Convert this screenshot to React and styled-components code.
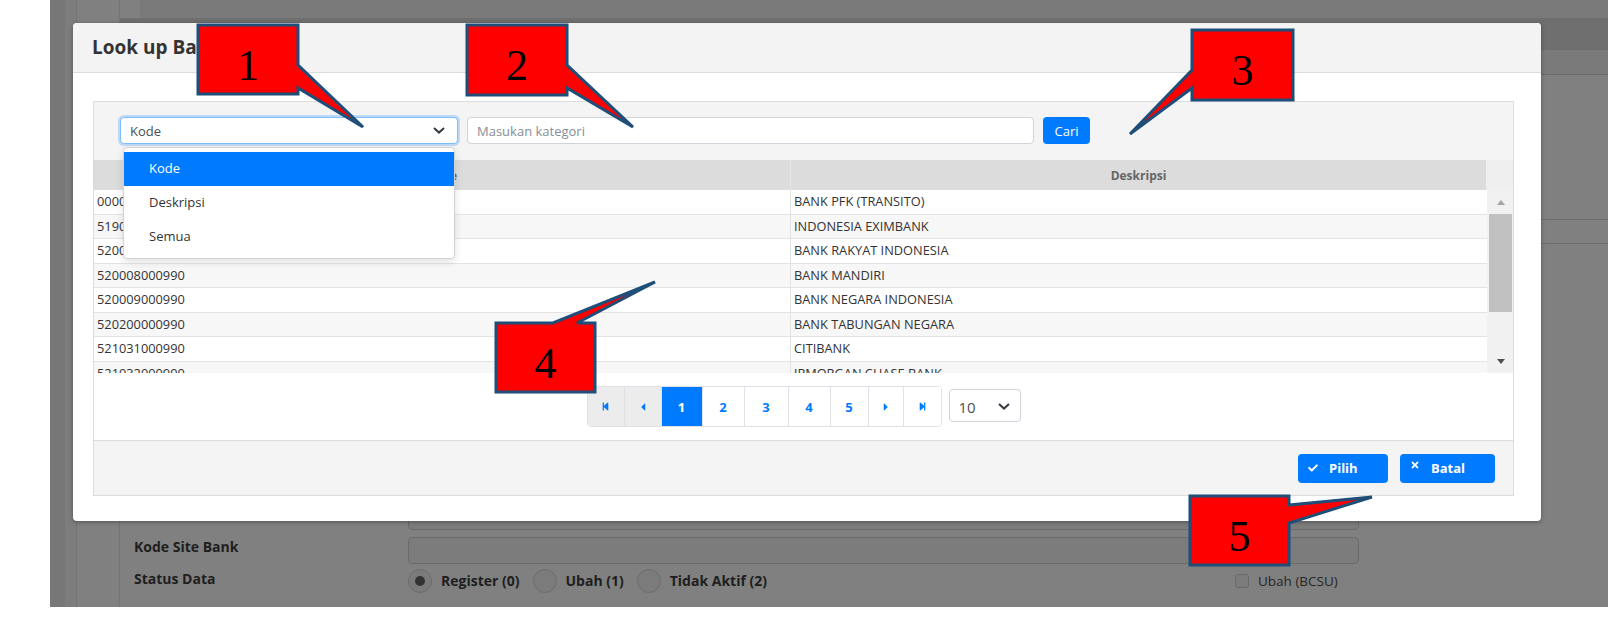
import styled, { createGlobalStyle } from "styled-components";
import { FaCheck, FaTimes, FaStepBackward, FaStepForward, FaCaretLeft, FaCaretRight } from "react-icons/fa";

const GlobalStyle = createGlobalStyle`
  html, body { margin: 0; padding: 0; background: #fff; }
  body { font-family: "Open Sans", "Liberation Sans", sans-serif; }
  * { box-sizing: border-box; }
`;

const Screen = styled.div`
  position: relative;
  width: 1622px;
  height: 620px;
  overflow: hidden;
  background: #fff;
`;

/* ---- page behind the modal (darkened by backdrop) ---- */
const Backdrop = styled.div`
  margin-left: 50px;
  width: 1558px;
  height: 607px;
  background: #808080;
  display: flex;
`;
const Rail = styled.div`
  width: 15px;
  background: #777;
`;
const NavStrip = styled.div`
  width: ${(p) => p.$w}px;
  border-right: 1px solid #737373;
  background: ${(p) => p.$bg || "#808080"};
`;
const Main = styled.div`
  flex: 1;
  display: flex;
  flex-direction: column;
  min-width: 0;
`;
const Band = styled.div`
  height: ${(p) => p.$h}px;
  flex-shrink: 0;
  margin-left: ${(p) => p.$ml || 0}px;
  background: ${(p) => p.$bg || "transparent"};
  border-bottom: ${(p) => (p.$line ? "1px solid #6c6c6c" : "none")};
`;
const Form = styled.div`
  margin-top: auto;
  padding: 0 0 15px 14px;
  display: flex;
  flex-direction: column;
`;
const FormRow = styled.div`
  display: flex;
  align-items: center;
  height: ${(p) => p.$h}px;
  margin-top: ${(p) => p.$mt || 0}px;
`;
const FormLabel = styled.div`
  width: 274px;
  align-self: flex-start;
  line-height: 20px;
  font-size: 14px;
  font-weight: 700;
  color: #1e1e1e;
`;
const FieldBox = styled.div`
  width: 951px;
  height: 100%;
  background: #7c7c7c;
  border: 1px solid #6a6a6a;
  border-radius: 4px;
`;
const RadioGroup = styled.div`
  display: flex;
  align-items: center;
  width: 827px;
`;
const Radio = styled.span`
  width: 24px;
  height: 24px;
  border-radius: 50%;
  border: 1px solid #6c6c6c;
  background: #7b7b7b;
  display: flex;
  align-items: center;
  justify-content: center;
  margin-right: 9px;
  &::after {
    content: "";
    width: 10px;
    height: 10px;
    border-radius: 50%;
    background: ${(p) => (p.$on ? "#333" : "transparent")};
  }
`;
const RadioText = styled.span`
  font-size: 14px;
  font-weight: 700;
  color: #1e1e1e;
  margin-right: 13px;
`;
const Check = styled.span`
  width: 14px;
  height: 14px;
  border: 1px solid #6a6a6a;
  border-radius: 3px;
  background: #7b7b7b;
  margin-right: 9px;
`;
const CheckText = styled.span`
  font-size: 13.5px;
  color: #262626;
`;

/* ---- modal ---- */
const Modal = styled.div`
  position: absolute;
  left: 73px;
  top: 23px;
  width: 1468px;
  height: 498px;
  background: #fff;
  border-radius: 4px;
  box-shadow: 0 1px 4px rgba(0, 0, 0, 0.35);
  display: flex;
  flex-direction: column;
`;
const ModalHeader = styled.div`
  height: 50px;
  flex-shrink: 0;
  background: #f3f3f3;
  border-bottom: 1px solid #dcdcdc;
  border-radius: 4px 4px 0 0;
  display: flex;
  align-items: center;
  padding: 0 0 2px 19px;
  font-size: 19px;
  font-weight: 700;
  color: #333;
`;
const ModalBody = styled.div`
  flex: 1;
  display: flex;
  padding: 28px 27px 25px 20px;
`;
const Panel = styled.div`
  flex: 1;
  display: flex;
  flex-direction: column;
  background: #f4f4f4;
  border: 1px solid #dcdcdc;
`;
const FilterRow = styled.div`
  height: 58px;
  flex-shrink: 0;
  display: flex;
  align-items: flex-start;
  gap: 9px;
  padding: 15px 0 0 26px;
`;
const SelectWrap = styled.div`
  position: relative;
  width: 338px;
`;
const SelectBox = styled.div`
  height: 27px;
  display: flex;
  align-items: center;
  justify-content: space-between;
  padding: 0 12px 0 9px;
  background: #fff;
  border: 1px solid ${(p) => (p.$focus ? "#80bdff" : "#ced4da")};
  border-radius: 4px;
  box-shadow: ${(p) => (p.$focus ? "0 0 0 2px rgba(0, 123, 255, 0.22)" : "none")};
  font-size: 13px;
  color: #495057;
`;
const TextInput = styled.div`
  width: 567px;
  height: 27px;
  display: flex;
  align-items: center;
  padding-left: 9px;
  background: #fff;
  border: 1px solid #ced4da;
  border-radius: 4px;
  font-size: 13px;
  color: #868e96;
`;
const BlueButton = styled.button`
  height: ${(p) => p.$h || 27}px;
  width: ${(p) => p.$w}px;
  display: flex;
  align-items: center;
  justify-content: ${(p) => (p.$icon ? "flex-start" : "center")};
  gap: 11px;
  padding: 0 0 0 ${(p) => (p.$icon ? 10 : 0)}px;
  background: #007bff;
  border: none;
  border-radius: 4px;
  color: #fff;
  font-family: inherit;
  font-size: 13px;
  font-weight: ${(p) => (p.$icon ? 700 : 400)};
  svg {
    font-size: 10px;
  }
`;
const Menu = styled.div`
  position: absolute;
  left: 3px;
  top: 30px;
  width: 332px;
  padding: 4px 0;
  background: #fff;
  border: 1px solid #d2d2d2;
  border-radius: 4px;
  box-shadow: 0 3px 8px rgba(0, 0, 0, 0.12);
  z-index: 5;
`;
const MenuItem = styled.div`
  height: 34px;
  display: flex;
  align-items: center;
  padding: 0 0 3px 25px;
  font-size: 13px;
  color: ${(p) => (p.$active ? "#fff" : "#333")};
  background: ${(p) => (p.$active ? "#007bff" : "transparent")};
`;

const TableWrap = styled.div`
  height: 280px;
  flex-shrink: 0;
  display: flex;
  flex-direction: column;
  background: #fff;
`;
const HeadRow = styled.div`
  height: 30px;
  display: grid;
  grid-template-columns: 696px 696px 1fr;
  background: #dcdcdc;
`;
const HeadCell = styled.div`
  display: flex;
  align-items: center;
  justify-content: center;
  font-size: 12px;
  font-weight: 700;
  color: #666;
  background: ${(p) => (p.$blank ? "#efefef" : "transparent")};
  border-left: ${(p) => (p.$div ? "1px solid #e6e6e6" : "none")};
`;
const BodyArea = styled.div`
  height: 183px;
  display: flex;
`;
const Rows = styled.div`
  width: 1393px;
  overflow: hidden;
`;
const Row = styled.div`
  display: grid;
  grid-template-columns: 696px 697px;
  height: 24.5px;
  border-bottom: 1px solid #e3e3e3;
  background: ${(p) => (p.$alt ? "#f7f7f7" : "#fff")};
`;
const Cell = styled.div`
  padding-left: 3px;
  font-size: 12.8px;
  line-height: 23.5px;
  color: #333;
  border-left: ${(p) => (p.$div ? "1px solid #e3e3e3" : "none")};
  white-space: nowrap;
`;
const ScrollTrack = styled.div`
  flex: 1;
  display: flex;
  flex-direction: column;
  align-items: center;
  padding: 0 1px 0 2px;
  background: #f1f1f1;
`;
const ScrollArrow = styled.div`
  height: 24px;
  width: 100%;
  display: flex;
  align-items: center;
  justify-content: center;
  &::after {
    content: "";
    border-left: 4px solid transparent;
    border-right: 4px solid transparent;
    ${(p) =>
      p.$down
        ? "border-top: 5px solid #505050;"
        : "border-bottom: 5px solid #a3a3a3;"}
  }
`;
const Thumb = styled.div`
  width: 100%;
  height: 98px;
  background: #c1c1c1;
`;
const TrackGap = styled.div`
  flex: 1;
`;
const PagerRow = styled.div`
  flex: 1;
  display: flex;
  justify-content: center;
  align-items: flex-start;
  gap: 7px;
  padding-top: 13px;
`;
const Pager = styled.div`
  display: flex;
  height: 41px;
  border: 1px solid #dee2e6;
  border-radius: 4px;
  overflow: hidden;
`;
const PageBtn = styled.div`
  width: ${(p) => p.$w}px;
  display: flex;
  align-items: center;
  justify-content: center;
  border-left: ${(p) => (p.$first ? "none" : "1px solid #dee2e6")};
  background: ${(p) => (p.$active ? "#007bff" : p.$muted ? "#ececec" : "#fff")};
  color: ${(p) => (p.$active ? "#fff" : "#007bff")};
  font-size: 13px;
  font-weight: 700;
  svg {
    font-size: ${(p) => (p.$caret ? 12 : 9)}px;
  }
`;
const SizeSelect = styled.div`
  margin-top: 3px;
  width: 72px;
  height: 33px;
  display: flex;
  align-items: center;
  justify-content: space-between;
  padding: 2px 10px 0 9px;
  border: 1px solid #ced4da;
  border-radius: 4px;
  font-size: 15px;
  color: #495057;
`;
const Footer = styled.div`
  flex: 1;
  display: flex;
  justify-content: flex-end;
  align-items: center;
  gap: 12px;
  padding-right: 18px;
  border-top: 1px solid #dcdcdc;
`;
const XIcon = styled(FaTimes)`
  margin-top: -6px;
`;

/* ---- annotation callouts ---- */
const Overlay = styled.svg`
  position: absolute;
  left: 0;
  top: 0;
  pointer-events: none;
`;
const CalloutNum = styled.div`
  position: absolute;
  left: ${(p) => p.$x}px;
  top: ${(p) => p.$y}px;
  width: ${(p) => p.$w}px;
  height: ${(p) => p.$h}px;
  display: flex;
  align-items: center;
  justify-content: center;
  padding-top: 12px;
  font-family: "Liberation Serif", "Times New Roman", serif;
  font-size: 44px;
  line-height: 1;
  color: #000;
`;

const Chevron = ({ size = 12 }) => (
  <svg width={size} height={size * 0.6} viewBox="0 0 12 7">
    <path d="M1 1l5 4.5L11 1" fill="none" stroke="#343a40" strokeWidth="2" />
  </svg>
);

const banks = [
  ["000000000990", "BANK PFK (TRANSITO)"],
  ["519000000990", "INDONESIA EXIMBANK"],
  ["520002000990", "BANK RAKYAT INDONESIA"],
  ["520008000990", "BANK MANDIRI"],
  ["520009000990", "BANK NEGARA INDONESIA"],
  ["520200000990", "BANK TABUNGAN NEGARA"],
  ["521031000990", "CITIBANK"],
  ["521032000990", "JPMORGAN CHASE BANK"],
];

const callouts = [
  { n: "1", x: 198, y: 25, w: 100, h: 69, side: "right", a: 40, b: 63, tx: 363, ty: 127 },
  { n: "2", x: 467, y: 25, w: 100, h: 70, side: "right", a: 40, b: 63, tx: 633, ty: 127 },
  { n: "3", x: 1192, y: 30, w: 101, h: 70, side: "left", a: 40, b: 58, tx: 1130, ty: 134 },
  { n: "4", x: 496, y: 323, w: 99, h: 69, side: "top", a: 57, b: 81, tx: 655, ty: 282 },
  { n: "5", x: 1190, y: 496, w: 99, h: 69, side: "right", a: 9, b: 27, tx: 1372, ty: 497 },
];

// outline of a rectangular callout with its pointer wedge on one side
function calloutPath({ x, y, w, h, side, a, b, tx, ty }) {
  let pts;
  if (side === "right") {
    pts = [[x, y], [x + w, y], [x + w, y + a], [tx, ty], [x + w, y + b], [x + w, y + h], [x, y + h]];
  } else if (side === "left") {
    pts = [[x, y], [x + w, y], [x + w, y + h], [x, y + h], [x, y + b], [tx, ty], [x, y + a]];
  } else {
    pts = [[x, y], [x + a, y], [tx, ty], [x + b, y], [x + w, y], [x + w, y + h], [x, y + h]];
  }
  return "M" + pts.map((p) => p.join(",")).join(" L") + " Z";
}

function App() {
  return (
    <Screen>
      <GlobalStyle />
      <Backdrop>
        <Rail />
        <NavStrip $w={12} $bg="#7d7d7d" />
        <NavStrip $w={43} />
        <Main>
          <Band $h={18} $ml={20} $bg="#7a7a7a" />
          <Band $h={32} $bg="#6f6f6f" />
          <Band $h={25} $bg="#7a7a7a" $line />
          <Band $h={128} />
          <Band $h={17} $line />
          <Band $h={24} $line />
          <Form>
            <FormRow $h={28}>
              <FormLabel />
              <FieldBox />
            </FormRow>
            <FormRow $h={27} $mt={7}>
              <FormLabel>Kode Site Bank</FormLabel>
              <FieldBox />
            </FormRow>
            <FormRow $h={23} $mt={5}>
              <FormLabel>Status Data</FormLabel>
              <RadioGroup>
                <Radio $on />
                <RadioText>Register (0)</RadioText>
                <Radio />
                <RadioText>Ubah (1)</RadioText>
                <Radio />
                <RadioText>Tidak Aktif (2)</RadioText>
              </RadioGroup>
              <Check />
              <CheckText>Ubah (BCSU)</CheckText>
            </FormRow>
          </Form>
        </Main>
      </Backdrop>

      <Modal>
        <ModalHeader>Look up Bank</ModalHeader>
        <ModalBody>
          <Panel>
            <FilterRow>
              <SelectWrap>
                <SelectBox $focus>
                  <span>Kode</span>
                  <Chevron />
                </SelectBox>
                <Menu>
                  <MenuItem $active>Kode</MenuItem>
                  <MenuItem>Deskripsi</MenuItem>
                  <MenuItem>Semua</MenuItem>
                </Menu>
              </SelectWrap>
              <TextInput>Masukan kategori</TextInput>
              <BlueButton $w={47}>Cari</BlueButton>
            </FilterRow>
            <TableWrap>
              <HeadRow>
                <HeadCell>Kode</HeadCell>
                <HeadCell $div>Deskripsi</HeadCell>
                <HeadCell $blank />
              </HeadRow>
              <BodyArea>
                <Rows>
                  {banks.map(([kode, desk], i) => (
                    <Row key={kode} $alt={i % 2 === 1}>
                      <Cell>{kode}</Cell>
                      <Cell $div>{desk}</Cell>
                    </Row>
                  ))}
                </Rows>
                <ScrollTrack>
                  <ScrollArrow />
                  <Thumb />
                  <TrackGap />
                  <ScrollArrow $down />
                </ScrollTrack>
              </BodyArea>
              <PagerRow>
                <Pager>
                  <PageBtn $w={36} $first $muted><FaStepBackward /></PageBtn>
                  <PageBtn $w={37} $muted $caret><FaCaretLeft /></PageBtn>
                  <PageBtn $w={41} $active>1</PageBtn>
                  <PageBtn $w={42}>2</PageBtn>
                  <PageBtn $w={44}>3</PageBtn>
                  <PageBtn $w={42}>4</PageBtn>
                  <PageBtn $w={38}>5</PageBtn>
                  <PageBtn $w={35} $caret><FaCaretRight /></PageBtn>
                  <PageBtn $w={38}><FaStepForward /></PageBtn>
                </Pager>
                <SizeSelect>
                  <span>10</span>
                  <Chevron />
                </SizeSelect>
              </PagerRow>
            </TableWrap>
            <Footer>
              <BlueButton $w={90} $h={29} $icon>
                <FaCheck />
                Pilih
              </BlueButton>
              <BlueButton $w={95} $h={29} $icon>
                <XIcon />
                Batal
              </BlueButton>
            </Footer>
          </Panel>
        </ModalBody>
      </Modal>

      <Overlay width="1622" height="620">
        {callouts.map((c) => (
          <path
            key={c.n}
            d={calloutPath(c)}
            fill="#ff0000"
            stroke="#1f4e79"
            strokeWidth="3"
            strokeLinejoin="miter"
          />
        ))}
      </Overlay>
      {callouts.map((c) => (
        <CalloutNum key={c.n} $x={c.x} $y={c.y} $w={c.w} $h={c.h}>
          {c.n}
        </CalloutNum>
      ))}
    </Screen>
  );
}

export default App;
